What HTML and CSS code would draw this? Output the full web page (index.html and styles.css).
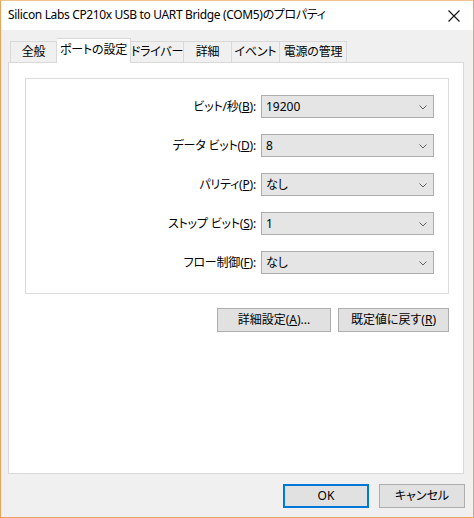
FILE: index.html
```html
<!DOCTYPE html>
<html lang="ja">
<head>
<meta charset="utf-8">
<title>プロパティ</title>
<link rel="stylesheet" href="styles.css">
</head>
<body>
<div class="window">
  <div class="titlebar">
    <span class="title">Silicon Labs CP210x USB to UART Bridge (COM5)のプロパティ</span>
    <svg class="close" width="12" height="12" viewBox="0 0 12 12"><path d="M0.5 0.5 L11.5 11.5 M11.5 0.5 L0.5 11.5" stroke="#111" stroke-width="1.1" fill="none"/></svg>
  </div>
  <div class="client">
    <div class="tabs">
      <div class="tab t1">全般</div>
      <div class="tab t2 selected">ポートの設定</div>
      <div class="tab t3">ドライバー</div>
      <div class="tab t4">詳細</div>
      <div class="tab t5">イベント</div>
      <div class="tab t6">電源の管理</div>
    </div>
    <div class="panel">
      <div class="group">
        <div class="row"><span class="label">ビット/秒(<u>B</u>):</span><div class="combo"><span>19200</span><svg class="chev" width="8" height="5" viewBox="0 0 8 5"><path d="M0.5 0.5 L4 4 L7.5 0.5" stroke="#606060" fill="none"/></svg></div></div>
        <div class="row"><span class="label">データ ビット(<u>D</u>):</span><div class="combo"><span>8</span><svg class="chev" width="8" height="5" viewBox="0 0 8 5"><path d="M0.5 0.5 L4 4 L7.5 0.5" stroke="#606060" fill="none"/></svg></div></div>
        <div class="row"><span class="label">パリティ(<u>P</u>):</span><div class="combo"><span>なし</span><svg class="chev" width="8" height="5" viewBox="0 0 8 5"><path d="M0.5 0.5 L4 4 L7.5 0.5" stroke="#606060" fill="none"/></svg></div></div>
        <div class="row"><span class="label">ストップ ビット(<u>S</u>):</span><div class="combo"><span>1</span><svg class="chev" width="8" height="5" viewBox="0 0 8 5"><path d="M0.5 0.5 L4 4 L7.5 0.5" stroke="#606060" fill="none"/></svg></div></div>
        <div class="row"><span class="label">フロー制御(<u>F</u>):</span><div class="combo"><span>なし</span><svg class="chev" width="8" height="5" viewBox="0 0 8 5"><path d="M0.5 0.5 L4 4 L7.5 0.5" stroke="#606060" fill="none"/></svg></div></div>
      </div>
      <div class="actions">
        <div class="btn b-adv">詳細設定(<u>A</u>)...</div>
        <div class="btn b-def">既定値に戻す(<u>R</u>)</div>
      </div>
    </div>
    <div class="footer">
      <div class="btn b-ok">OK</div>
      <div class="btn b-cancel">キャンセル</div>
    </div>
  </div>
</div>
</body>
</html>
```
FILE: styles.css
```css
html, body {
  margin: 0;
  padding: 0;
  background: #f0f0f0;
}
.window {
  box-sizing: border-box;
  width: 474px;
  height: 518px;
  border: 1px solid #e9a35b;
  border-top-color: #f2c48f;
  background: #f0f0f0;
  display: flex;
  flex-direction: column;
  font-family: "Noto Sans", "Noto Sans CJK JP", sans-serif;
  font-feature-settings: "palt";
  font-size: 12px;
  color: #000;
}
.titlebar {
  height: 29px;
  background: #fff;
  display: flex;
  align-items: center;
  padding: 0 0 0 7px;
  flex: none;
}
.title {
  flex: 1;
  line-height: 16px;
  font-size: 12px;
  letter-spacing: -0.35px;
  position: relative;
  top: -1px;
  white-space: nowrap;
}
.close {
  margin-right: 13px;
}
.client {
  flex: 1;
  display: flex;
  flex-direction: column;
  padding: 8px 9px 0 7px;
}
.tabs {
  display: flex;
  align-items: flex-end;
  height: 24px;
  padding-left: 2px;
  position: relative;
  z-index: 1;
}
.tab {
  box-sizing: border-box;
  height: 21px;
  border: 1px solid #d9d9d9;
  border-bottom: none;
  border-left: none;
  background: #f0f0f0;
  display: flex;
  align-items: center;
  justify-content: center;
  line-height: 16px;
  white-space: nowrap;
  letter-spacing: -0.2px;
}
.t1 { width: 47px; border-left: 1px solid #d9d9d9; }
.t2 { width: 74px; }
.t3 { width: 53px; }
.t4 { width: 48px; }
.t5 { width: 48px; }
.t6 { width: 67px; }
.tab.selected {
  height: 25px;
  margin-bottom: -1px;
  background: #fff;
  border-left: none;
  padding-bottom: 2px;
}
.panel {
  box-sizing: border-box;
  width: 456px;
  height: 412px;
  background: #fff;
  border: 1px solid #d9d9d9;
  padding: 15px 14px 0 16px;
  display: flex;
  flex-direction: column;
}
.group {
  box-sizing: border-box;
  height: 216px;
  border: 1px solid #dcdcdc;
  padding: 16px 14px 0 0;
  display: flex;
  flex-direction: column;
  gap: 16px;
}
.row {
  display: flex;
  align-items: center;
  justify-content: flex-end;
  height: 23px;
}
.label {
  margin-right: 5px;
  line-height: 16px;
  white-space: nowrap;
  letter-spacing: -0.2px;
}
.combo {
  box-sizing: border-box;
  width: 173px;
  height: 23px;
  background: #e5e5e5;
  border: 1px solid #adadad;
  display: flex;
  align-items: center;
  justify-content: space-between;
  padding: 0 6px 0 4px;
  line-height: 16px;
}
.chev {
  margin-top: 1px;
}
.actions {
  display: flex;
  justify-content: flex-end;
  gap: 7px;
  margin-top: 14px;
}
.btn {
  box-sizing: border-box;
  height: 24px;
  background: #e1e1e1;
  border: 1px solid #adadad;
  display: flex;
  align-items: center;
  justify-content: center;
  line-height: 16px;
  white-space: nowrap;
}
.b-adv { width: 114px; }
.b-def { width: 111px; }
.footer {
  display: flex;
  justify-content: flex-end;
  gap: 10px;
  padding-top: 10px;
  margin-right: -1px;
}
.b-ok {
  width: 86px;
  border: 2px solid #0078d7;
}
.b-cancel {
  width: 86px;
}
```
